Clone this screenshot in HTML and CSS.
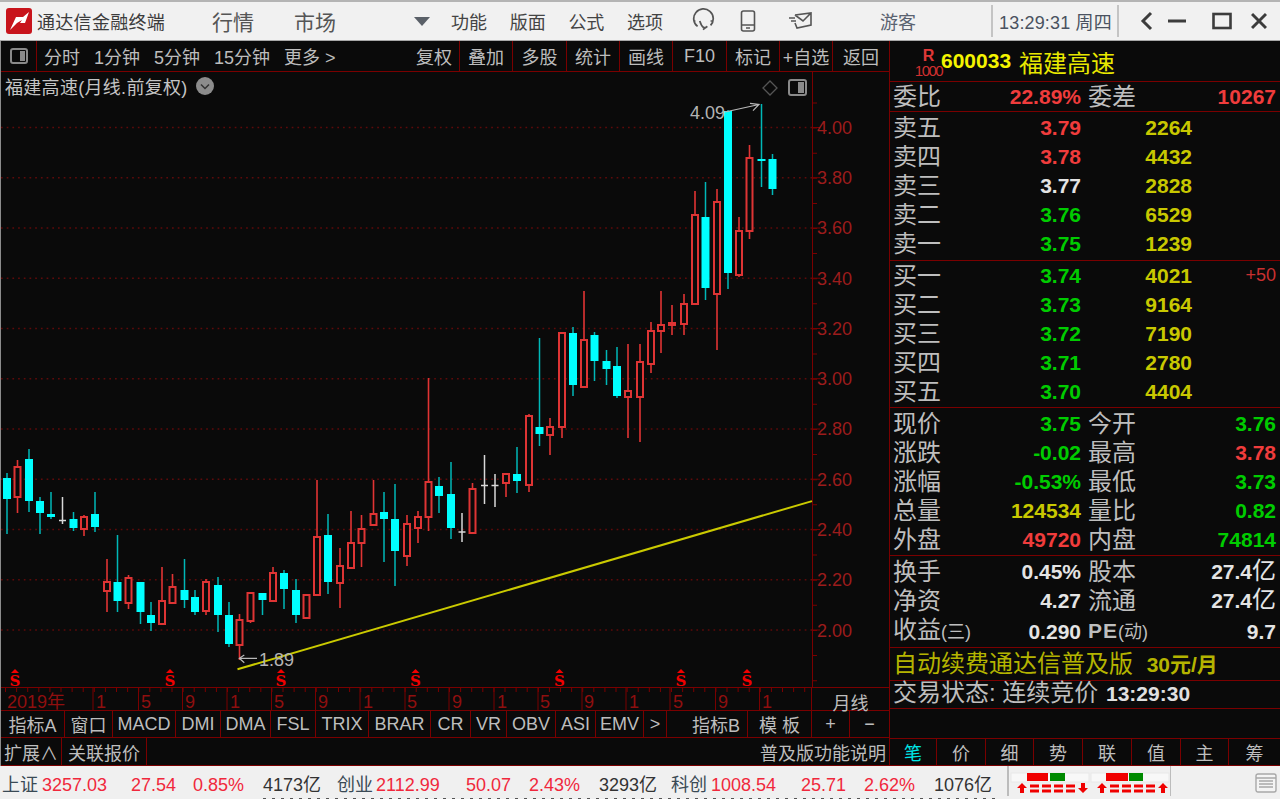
FILE: index.html
```html
<!DOCTYPE html>
<html lang="zh-CN">
<head>
<meta charset="utf-8">
<title>通达信金融终端</title>
<link rel="stylesheet" href="styles.css">
</head>
<body>
<div class="window">
  <header class="titlebar">
    <svg class="logo" viewBox="0 0 26 26"><rect width="26" height="26" rx="3" fill="#c8141c"/><path d="M4 22 L10 9 L17 9 L23 4 L19 15 L14 15 L16 12 L11 15 Z" fill="#fff"/></svg>
    <span class="app-name">通达信金融终端</span>
    <nav class="nav-main"><span>行情</span><span>市场</span></nav>
    <span class="caret"></span>
    <nav class="nav-sub"><span>功能</span><span>版面</span><span>公式</span><span>选项</span></nav>
    <svg class="ico ico-head" viewBox="0 0 24 24"><path d="M7 17 A9 9 0 1 1 19 16 M3 12 H5 M19 12 H21 M9 12 Q12 21 16 17 L12 20" /></svg>
    <svg class="ico ico-phone" viewBox="0 0 16 22"><rect x="1.5" y="1" width="13" height="20" rx="2"/><path d="M2 15 H14 M6 18 H10"/></svg>
    <svg class="ico ico-mail" viewBox="0 0 26 20"><path d="M7 4 L23 2 L23 14 L9 17 L7 12 M7 4 L15 10 L23 2 M1 7 H7 M3 10 H8"/></svg>
    <span class="user">游客</span>
    <span class="clock">13:29:31 周四</span>
    <svg class="ctl ctl-back" viewBox="0 0 14 20"><path d="M11 2 L3 10 L11 18"/></svg>
    <svg class="ctl ctl-min" viewBox="0 0 18 20"><path d="M0 10 H18"/></svg>
    <svg class="ctl ctl-max" viewBox="0 0 20 20"><rect x="1.5" y="3" width="17" height="14"/></svg>
    <svg class="ctl ctl-close" viewBox="0 0 16 20"><path d="M1 3 L15 17 M15 3 L1 17"/></svg>
  </header>

  <main class="main">
    <section class="left">
      <div class="tool">
        <div class="cell"><svg class="panel-btn" viewBox="0 0 18 16"><rect x="1" y="1" width="16" height="14" rx="2"/><rect class="half" x="10" y="3" width="5" height="10"/></svg></div>
        <div class="cell tool-periods">
          <span>分时</span><span>1分钟</span><span>5分钟</span><span>15分钟</span><span>更多 &gt;</span><span class="push">复权</span>
        </div>
        <div class="cell">叠加</div><div class="cell">多股</div><div class="cell">统计</div><div class="cell">画线</div><div class="cell">F10</div><div class="cell">标记</div><div class="cell">+自选</div><div class="cell">返回</div>
      </div>

      <div class="chart">
        <div class="chart-title">福建高速(月线.前复权)<svg class="chev" viewBox="0 0 18 18"><circle cx="9" cy="9" r="9"/><path d="M5 7.5 L9 11.5 L13 7.5"/></svg></div>
        <svg class="chart-svg" viewBox="1 72 887 615">
          <path class="grid" d="M1 127.5H812M1 177.7H812M1 228H812M1 278.2H812M1 328.5H812M1 378.7H812M1 429H812M1 479.2H812M1 529.5H812M1 579.7H812M1 630H812"/>
          <path class="axis" d="M812.5 72V687"/>
          <path class="tick-minor" d="M812 102.4V687"/>
          <path class="tick-major" d="M812 127.5h8M812 177.7h8M812 228h8M812 278.2h8M812 328.5h8M812 378.7h8M812 429h8M812 479.2h8M812 529.5h8M812 579.7h8M812 630h8"/>
          <g class="price">
            <text x="817" y="134">4.00</text><text x="817" y="184">3.80</text><text x="817" y="234">3.60</text><text x="817" y="285">3.40</text><text x="817" y="335">3.20</text><text x="817" y="385">3.00</text><text x="817" y="435">2.80</text><text x="817" y="486">2.60</text><text x="817" y="536">2.40</text><text x="817" y="586">2.20</text><text x="817" y="637">2.00</text>
          </g>
          <path class="red-wick" d="M17.5 460V513M84 515V536M107 559V612M128.5 575V609M162 567V624M172.5 574V603M206 579V615M239.5 614V660M250.5 593V623M273 567V601M306.5 594V619M317 480V595M340 548V608M351 511V569M361.5 515V567M373.5 480V525M407 515V566M418 511V543M428.5 378V531M472.5 483V534M506 474V497M529 414V492M550 418V455M562 333V438M584 291V387M628 344V438M640 344V442M651 322V373M661 291V353M672 305V335M684 294V335M695 191V304M717 189V350M739 217V277M749.5 145V239"/>
          <path class="red-body" d="M14.5 467h6V497h-6zM81 517h6V529h-6zM104 582h6V591h-6zM125.5 578h6V603h-6zM159 601h6V624h-6zM169.5 587h6V603h-6zM203 582h6V611h-6zM236.5 620h6V645h-6zM247.5 593h6V621h-6zM270 573h6V601h-6zM303.5 595h6V618h-6zM314 537h6V595h-6zM337 566h6V583h-6zM348 543h6V568h-6zM358.5 529h6V543h-6zM370.5 514h6V525h-6zM404 524h6V556h-6zM415 517h6V528h-6zM425.5 482h6V517h-6zM469.5 489h6V533h-6zM503 474h6V483h-6zM526 416h6V485h-6zM547 427h6V435h-6zM559 333h6V427h-6zM581 340h6V387h-6zM625 391h6V397h-6zM637 362h6V397h-6zM648 331h6V364h-6zM658 325h6V331h-6zM669 323h6V325h-6zM681 304h6V324h-6zM692 215h6V304h-6zM714 202h6V294h-6zM736 231h6V275h-6zM746.5 158h6V231h-6z"/>
          <path class="cyan-wick" d="M7 473V534M29 449V512M40 497V534M51 492V519M73.5 512V531M95 492V532M117.5 535V612M140.5 582V624M151 602V631M184.5 559V608M195 590V615M218 577V632M229 602V647M262.5 593V615M284 570V609M296 579V623M328 514V594M384 492V562M395 484V586M439 477V513M451 462V539M517 447V493M539.5 338V446M573 327V396M594.5 332V381M606.5 350V385M617 347V398M705.5 182V300M728 110V289M761.5 104V187M772.5 154V195"/>
          <path class="cyan-body" d="M3 478h8V499h-8zM25 459h8V501h-8zM36 501h8V513h-8zM47 514h8V517h-8zM69.5 519h8V528h-8zM91 514h8V527h-8zM113.5 582h8V601h-8zM136.5 582h8V612h-8zM147 615h8V623h-8zM180.5 590h8V600h-8zM191 597h8V612h-8zM214 585h8V615h-8zM225 615h8V644h-8zM258.5 593h8V600h-8zM280 573h8V589h-8zM292 590h8V615h-8zM324 535h8V582h-8zM380 512h8V519h-8zM391 519h8V551h-8zM435 486h8V496h-8zM447 494h8V528h-8zM513 474h8V481h-8zM535.5 427h8V434h-8zM569 333h8V385h-8zM590.5 335h8V361h-8zM602.5 361h8V369h-8zM613 366h8V396h-8zM701.5 217h8V288h-8zM724 111h8V273h-8zM757.5 159h8V161h-8zM768.5 159h8V189h-8z"/>
          <path class="white-k" d="M62.5 497V524M59 520.5h7M462 513V542M458.5 532h7M484.5 455V504M481 485.5h7M495 474V507M491.5 485.5h7"/>
          <path class="trend" d="M237.5 669.3L812 501.1"/>
          <path class="note" d="M725 112L759 104.5M750 103.3L759 104.5L753 110.7M239.3 658.3H257M244.3 655L239.3 658.3L244.3 662.7"/>
          <text class="note-text" x="690" y="119">4.09</text>
          <text class="note-text" x="259" y="666">1.89</text>
          <path class="s-arrow" d="M15 669l4 4h-8zM170 669l4 4h-8zM281 669l4 4h-8zM415.500 669l4 4h-8zM559.500 669l4 4h-8zM681 669l4 4h-8zM747 669l4 4h-8z"/>
          <g class="s-mark"><text x="15" y="686">S</text><text x="170" y="686">S</text><text x="281" y="686">S</text><text x="415.500" y="686">S</text><text x="559.500" y="686">S</text><text x="681" y="686">S</text><text x="747" y="686">S</text></g>
          <path class="diamond" d="M770 81L777 88L770 95L763 88Z"/>
          <g class="panel-btn"><rect x="789" y="80" width="17" height="15" rx="2"/><rect class="half" x="798" y="82" width="6" height="11"/></g>
        </svg>
      </div>

      <div class="xaxis">
        <svg class="xaxis-svg" viewBox="1 0 810 22">
          <path class="x-tick" d="M5 2H811"/>
          <path class="x-major" d="M93 0V22M138.500 0V22M182.500 0V22M227 0V22M271.500 0V22M315.500 0V22M360 0V22M405 0V22M449 0V22M494 0V22M538 0V22M582 0V22M626 0V22M670 0V22M715.500 0V22M759.500 0V22"/>
          <g class="x-labels"><text x="7" y="20">2019年</text><text x="96" y="20">1</text><text x="141" y="20">5</text><text x="185" y="20">9</text><text x="230" y="20">1</text><text x="274" y="20">5</text><text x="318" y="20">9</text><text x="363" y="20">1</text><text x="407" y="20">5</text><text x="452" y="20">9</text><text x="497" y="20">1</text><text x="540" y="20">5</text><text x="584" y="20">9</text><text x="629" y="20">1</text><text x="673" y="20">5</text><text x="718" y="20">9</text><text x="762" y="20">1</text></g>
        </svg>
        <div class="xaxis-name">月线</div>
      </div>

      <div class="tabs">
        <div class="cell">指标A</div><div class="cell">窗口</div><div class="cell">MACD</div><div class="cell">DMI</div><div class="cell">DMA</div><div class="cell">FSL</div><div class="cell">TRIX</div><div class="cell">BRAR</div><div class="cell">CR</div><div class="cell">VR</div><div class="cell">OBV</div><div class="cell">ASI</div><div class="cell">EMV</div><div class="cell">&gt;</div><div class="cell tab-end">指标B</div><div class="cell">模 板</div><div class="cell">+</div><div class="cell">−</div>
      </div>

      <div class="ext">
        <div class="cell">扩展∧</div><div class="cell">关联报价</div><div class="ext-gap"></div><div class="cell">普及版功能说明</div>
      </div>
    </section>

    <aside class="panel">
      <div class="stock">
        <div class="rbadge"><b>R</b><span>1000</span></div>
        <div class="code">600033</div><div class="stock-name">福建高速</div>
      </div>
      <div class="sec sec-ratio">
        <div class="row"><span>委比</span><b class="up">22.89%</b><span class="l2">委差</span><b class="up">10267</b></div>
      </div>
      <div class="sec sec-sell">
        <div class="row book"><span>卖五</span><b class="up">3.79</b><b class="vol">2264</b></div>
        <div class="row book"><span>卖四</span><b class="up">3.78</b><b class="vol">4432</b></div>
        <div class="row book"><span>卖三</span><b class="flat">3.77</b><b class="vol">2828</b></div>
        <div class="row book"><span>卖二</span><b class="down">3.76</b><b class="vol">6529</b></div>
        <div class="row book"><span>卖一</span><b class="down">3.75</b><b class="vol">1239</b></div>
      </div>
      <div class="sec sec-buy">
        <div class="row book"><span>买一</span><b class="down">3.74</b><b class="vol">4021</b><em>+50</em></div>
        <div class="row book"><span>买二</span><b class="down">3.73</b><b class="vol">9164</b></div>
        <div class="row book"><span>买三</span><b class="down">3.72</b><b class="vol">7190</b></div>
        <div class="row book"><span>买四</span><b class="down">3.71</b><b class="vol">2780</b></div>
        <div class="row book"><span>买五</span><b class="down">3.70</b><b class="vol">4404</b></div>
      </div>
      <div class="sec sec-quote">
        <div class="row"><span>现价</span><b class="down">3.75</b><span class="l2">今开</span><b class="down">3.76</b></div>
        <div class="row"><span>涨跌</span><b class="down">-0.02</b><span class="l2">最高</span><b class="up">3.78</b></div>
        <div class="row"><span>涨幅</span><b class="down">-0.53%</b><span class="l2">最低</span><b class="down">3.73</b></div>
        <div class="row"><span>总量</span><b class="vol">124534</b><span class="l2">量比</span><b class="down">0.82</b></div>
        <div class="row"><span>外盘</span><b class="up">49720</b><span class="l2">内盘</span><b class="down">74814</b></div>
      </div>
      <div class="sec sec-fund">
        <div class="row"><span>换手</span><b class="flat">0.45%</b><span class="l2">股本</span><b class="flat">27.4<i>亿</i></b></div>
        <div class="row"><span>净资</span><b class="flat">4.27</b><span class="l2">流通</span><b class="flat">27.4<i>亿</i></b></div>
        <div class="row"><span>收益<small>(三)</small></span><b class="flat">0.290</b><span class="l2"><strong>PE</strong><small>(动)</small></span><b class="flat">9.7</b></div>
      </div>
      <div class="sec sec-ad">自动续费通达信普及版 <b>30元/月</b></div>
      <div class="sec sec-state">交易状态: 连续竞价 <b>13:29:30</b></div>
      <div class="sec sec-blank"></div>
      <div class="ptabs"><div class="cell on">笔</div><div class="cell">价</div><div class="cell">细</div><div class="cell">势</div><div class="cell">联</div><div class="cell">值</div><div class="cell">主</div><div class="cell">筹</div></div>
    </aside>
  </main>

  <footer class="status">
    <div class="tick tick-sh"><span class="nm">上证</span><span class="up v1">3257.03</span><span class="up v2">27.54</span><span class="up v3">0.85%</span><span class="amt">4173亿</span></div>
    <div class="tick tick-cy"><span class="nm">创业</span><span class="up v1">2112.99</span><span class="up v2">50.07</span><span class="up v3">2.43%</span><span class="amt">3293亿</span></div>
    <div class="tick tick-kc"><span class="nm">科创</span><span class="up v1">1008.54</span><span class="up v2">25.71</span><span class="up v3">2.62%</span><span class="amt">1076亿</span></div>
    <svg class="mini" viewBox="0 0 164 33">
      <path class="mini-sep" d="M1 0V30M164 0V30"/>
      <rect class="mini-bg" x="4" y="7" width="78" height="9"/><rect class="mini-bg" x="84" y="7" width="78" height="9"/>
      <rect class="mr" x="20" y="7" width="21" height="8"/><rect class="mg" x="43" y="7" width="15" height="8"/>
      <rect class="mr" x="99" y="7" width="22" height="8"/><rect class="mg" x="122" y="7" width="14" height="8"/>
      <path class="mr" d="M15 17l5 5h-3v5h-4v-5h-3zM95 17l5 5h-3v5h-4v-5h-3zM156 17l5 5h-3v5h-4v-5h-3zM76 27l-5-5h3v-5h4v5h3z"/>
      <path class="mr" d="M23 18.500h9v3h-9zM23 23.500h9v3h-9zM35 18.500h9v3h-9zM35 23.500h9v3h-9zM47 18.500h9v3h-9zM47 23.500h9v3h-9zM59 18.500h9v3h-9zM59 23.500h9v3h-9zM103 18.500h9v3h-9zM103 23.500h9v3h-9zM115 18.500h9v3h-9zM115 23.500h9v3h-9zM127 18.500h9v3h-9zM127 23.500h9v3h-9zM139 18.500h9v3h-9zM139 23.500h9v3h-9z"/>
    </svg>
    <svg class="sheet" viewBox="0 0 22 20"><rect x="1" y="1" width="20" height="18" rx="2"/><path d="M1 5H21M4 8H18M4 11H18M4 14H18"/></svg>
    <div class="clip-strip"></div>
  </footer>
</div>
</body>
</html>
```

FILE: styles.css
```css
* { box-sizing: border-box; }
html, body { margin: 0; height: 799px; overflow: hidden; background: #0a0a0a; }
body { font-family: "Liberation Sans", "Noto Sans CJK SC", sans-serif; }
.window { width: 1280px; height: 799px; display: flex; flex-direction: column; overflow: hidden; }

/* title bar */
.titlebar { height: 41px; flex: none; display: flex; align-items: center; background: #f1f1f1; border-top: 2px solid #b4b4b4; border-bottom: 1px solid #a8a8a8; color: #444; padding-left: 6px; position: relative; }
.logo { width: 26px; height: 26px; flex: none; }
.app-name { font-size: 18px; margin-left: 5px; width: 175px; color: #3c3c3c; white-space: nowrap; letter-spacing: .3px; }
.nav-main { display: flex; gap: 40px; font-size: 21px; color: #555; }
.caret { width: 0; height: 0; border: 8px solid transparent; border-top: 9px solid #5a6068; border-bottom: 0; margin-left: 78px; flex: none; }
.nav-sub { display: flex; gap: 22.7px; font-size: 18px; margin-left: 21px; color: #444; }
.ico { fill: none; stroke: #555; stroke-width: 1.6; flex: none; }
.ico-head { width: 26px; height: 26px; margin-left: 27px; }
.ico-phone { width: 16px; height: 24px; margin-left: 24px; }
.ico-mail { width: 26px; height: 20px; margin-left: 32px; }
.user { font-size: 18px; margin-left: 66px; color: #5a6270; width: 113px; border-right: 2px solid #c4c4c4; align-self: stretch; display: flex; align-items: center; margin-top: 3px; margin-bottom: 3px; }
.clock { font-size: 18px; margin-left: 6px; width: 120px; color: #4a5260; white-space: nowrap; align-self: stretch; display: flex; align-items: center; border-right: 2px solid #c4c4c4; margin-top: 3px; margin-bottom: 3px; letter-spacing: .15px; }
.ctl { fill: none; stroke: #3c3c3c; stroke-width: 3; flex: none; height: 20px; }
.ctl-back { width: 14px; margin-left: 21px; }
.ctl-min { width: 18px; margin-left: 14px; }
.ctl-max { width: 20px; margin-left: 26px; stroke-width: 2.6; }
.ctl-close { width: 16px; margin-left: 19px; }

/* main */
.main { height: 725px; flex: none; display: grid; grid-template-columns: 889px 390px; border-left: 1px solid #8c8c8c; }
.left { width: 889px; display: flex; flex-direction: column; border-right: 1px solid #7a0000; color: #bdbdbd; }
.cell { display: flex; align-items: center; justify-content: center; border-right: 1px solid #7a0000; font-size: 18px; white-space: nowrap; min-width: 0; }

.tool { height: 31px; flex: none; display: grid; grid-template-columns: 36px 423px 53px 54px 53px 53px 54px 53px 53px 1fr; border-bottom: 1px solid #7a0000; }
.tool .cell:last-child { border-right: 0; }
.tool-periods { justify-content: flex-start; padding: 0 7px; gap: 14px; }
.push { margin-left: auto; }
.panel-btn { fill: none; stroke: #8a8a8a; stroke-width: 2; }
.half { fill: #8a8a8a; stroke: none; }
svg.panel-btn { width: 18px; height: 16px; }

.chart { height: 615px; flex: none; position: relative; }
.chart-svg { display: block; width: 887px; height: 615px; overflow: visible; }
.chart-title { position: absolute; left: 4px; top: 1px; font-size: 18px; color: #c4c4c4; display: flex; align-items: center; gap: 8px; white-space: nowrap; letter-spacing: .3px; }
.chev { width: 18px; height: 18px; }
.chev circle { fill: #8c8c8c; }
.chev path { fill: none; stroke: #333; stroke-width: 1.5; }

.grid { stroke: #5e0a0a; stroke-width: 1.5; stroke-dasharray: 1.7 4; fill: none; }
.axis { stroke: #7a0000; stroke-width: 1; fill: none; }
.tick-minor { stroke: #7a0000; stroke-width: 5; stroke-dasharray: 1 24.12; fill: none; transform: translateX(2.5px); }
.tick-major { stroke: #7a0000; stroke-width: 1; fill: none; }
.price text { fill: #9c1c1c; font-size: 18px; }
.red-wick { stroke: #e03434; stroke-width: 1.6; fill: none; }
.red-body { stroke: #de3434; stroke-width: 2; fill: #0a0a0a; }
.cyan-wick { stroke: #00b8b8; stroke-width: 1.5; fill: none; }
.cyan-body { fill: #00ffff; stroke: none; }
.white-k { stroke: #d8d8d8; stroke-width: 1.5; fill: none; }
.trend { stroke: #caca00; stroke-width: 2; fill: none; }
.note { stroke: #b8b8b8; stroke-width: 1.2; fill: none; }
.note-text { fill: #b4b4b4; font-size: 18px; }
.s-arrow { fill: #f00000; }
.s-mark text { fill: #f00000; font: bold 15px "DejaVu Serif", serif; text-anchor: middle; }
.diamond { fill: none; stroke: #555; stroke-width: 1.3; }

.xaxis { height: 24px; flex: none; display: grid; grid-template-columns: 811px 1fr; border-top: 1px solid #7a0000; border-bottom: 1px solid #7a0000; }
.xaxis-svg { display: block; width: 811px; height: 22px; border-right: 1px solid #7a0000; overflow: visible; }
.x-tick { stroke: #7a0000; stroke-width: 4; stroke-dasharray: 1 10.1; fill: none; }
.x-major { stroke: #7a0000; stroke-width: 1; fill: none; }
.x-labels text { fill: #8f0f0f; font-size: 18px; }
.xaxis-name { font-size: 18px; display: flex; align-items: center; justify-content: center; padding-top: 1px; }

.tabs { height: 27px; flex: none; display: grid; grid-template-columns: 64px 48px 63px 45px 50px 45px 53px 62px 40px 36px 49px 40px 48px 23px 81px 64px 38px 1fr; border-bottom: 1px solid #7a0000; }
.tabs .cell:last-child { border-right: 0; }
.tab-end { padding-left: 18px; }
.ext { height: 28px; flex: none; display: grid; grid-template-columns: 61px 85px 610px 1fr; border-bottom: 1px solid #7a0000; }
.ext .cell:last-child { border-right: 0; }

/* right panel */
.panel { display: flex; flex-direction: column; color: #bebebe; font-size: 24px; white-space: nowrap; }
.sec { border-bottom: 1px solid #7a0000; flex: none; }
.stock { height: 41px; flex: none; display: flex; align-items: center; border-bottom: 1px solid #7a0000; padding-left: 26px; color: #ffff00; }
.rbadge { width: 25px; display: flex; flex-direction: column; align-items: center; line-height: 1; height: 30px; margin-top: 3px; }
.rbadge b { font-size: 16px; color: #e03838; line-height: 15px; }
.rbadge span { font-size: 15px; color: #d03030; letter-spacing: -1.5px; line-height: 15px; }
.code { font: bold 21px "Liberation Sans", sans-serif; color: #f4f400; }
.stock-name { font-size: 24px; margin-left: 8px; color: #e8e800; }

.row { height: 29px; display: grid; grid-template-columns: 48px 140px 55px 1fr; padding: 0 4px 0 3px; align-items: center; line-height: 29px; }
.row b { font: bold 21px/29px "Liberation Sans", sans-serif; text-align: right; }
.row i { font: normal 24px/24px "Noto Sans CJK SC", sans-serif; }
.row small { font-size: 18px; }
.row strong { font: bold 21px/29px "Liberation Sans", sans-serif; letter-spacing: 1px; }
.row .l2 { padding-left: 7px; }
.book { grid-template-columns: 48px 140px 111px 84px; }
.row em { font: normal 18px/29px "Liberation Sans", sans-serif; text-align: right; color: #c83030; }
.up { color: #f03c3c; }
.down { color: #00cc00; }
.flat { color: #e4e4e4; }
.vol { color: #c8c800; }
.sec-ratio { height: 30px; }
.sec-sell { height: 149px; padding-top: 1px; }
.sec-buy { height: 147px; padding-top: 0; }
.sec-quote { height: 148px; padding-top: 1px; }
.sec-fund { height: 92px; padding-top: 1px; }
.sec-ad { height: 33px; padding-left: 3px; line-height: 32px; color: #b4b400; }
.sec-ad b { font: bold 21px/32px "Liberation Sans", "Noto Sans CJK SC", sans-serif; margin-left: 7px; }
.sec-state { height: 28px; padding-left: 3px; line-height: 24px; }
.sec-state b { font: bold 21px/24px "Liberation Sans", sans-serif; color: #e0e0e0; margin-left: 1px; }
.sec-blank { height: 30px; }
.ptabs { height: 27px; flex: none; display: grid; grid-template-columns: 47px 49px 48px 49px 49px 49px 48px 1fr; border-bottom: 1px solid #7a0000; }
.ptabs .cell:last-child { border-right: 0; }
.on { color: #00e6e6; }

/* status bar */
.status { height: 33px; flex: none; display: flex; align-items: center; background: #f0f0f0; font-size: 18px; color: #333; position: relative; padding-left: 2px; }
.tick { display: grid; align-items: baseline; white-space: nowrap; padding-top: 1px; flex: none; }
.tick-sh { width: 335px; grid-template-columns: 40px 89px 62px 70px auto; }
.tick-cy { width: 334px; grid-template-columns: 39px 90px 63px 70px auto; }
.tick-kc { width: 336px; grid-template-columns: 40px 90px 63px 70px auto; }
.status .up { color: #f0283c; }
.nm { color: #3a4a55; }
.mini { width: 164px; height: 33px; flex: none; }
.mini-sep { stroke: #bcbcbc; stroke-width: 2; fill: none; }
.mini-bg { fill: #f8f8f8; stroke: #e8e8e8; stroke-width: 1; }
.mr { fill: #f00000; }
.mg { fill: #008a00; }
.sheet { width: 22px; height: 20px; fill: #f4f4f4; stroke: #a8a8a8; stroke-width: 1.4; margin-left: 84px; flex: none; }
.clip-strip { position: absolute; left: 263px; right: 285px; bottom: 0; height: 1px; background: repeating-linear-gradient(90deg, #555 0 3px, transparent 3px 9px); }
```
